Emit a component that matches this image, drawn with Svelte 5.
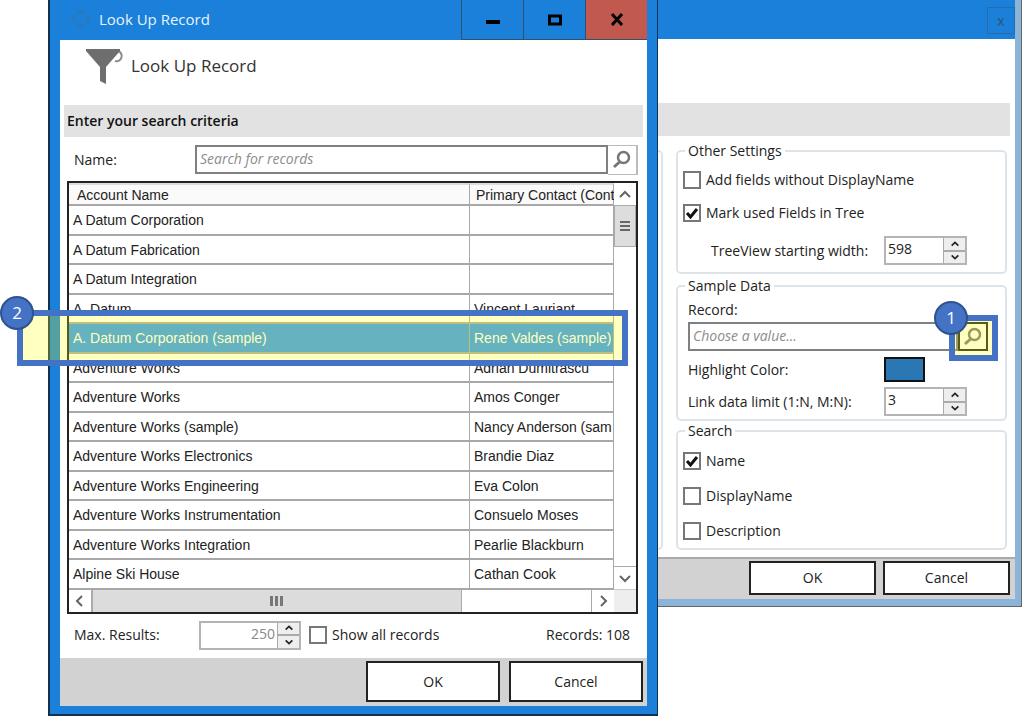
<script>
  const accounts = [
    { name: 'A Datum Corporation', contact: '' },
    { name: 'A Datum Fabrication', contact: '' },
    { name: 'A Datum Integration', contact: '' },
    { name: 'A. Datum', contact: 'Vincent Lauriant' },
    { name: 'A. Datum Corporation (sample)', contact: 'Rene Valdes (sample)' },
    { name: 'Adventure Works', contact: 'Adrian Dumitrascu' },
    { name: 'Adventure Works', contact: 'Amos Conger' },
    { name: 'Adventure Works (sample)', contact: 'Nancy Anderson (sam' },
    { name: 'Adventure Works Electronics', contact: 'Brandie Diaz' },
    { name: 'Adventure Works Engineering', contact: 'Eva Colon' },
    { name: 'Adventure Works Instrumentation', contact: 'Consuelo Moses' },
    { name: 'Adventure Works Integration', contact: 'Pearlie Blackburn' },
    { name: 'Alpine Ski House', contact: 'Cathan Cook' },
  ];

  let selected = $state(4);
  let search = $state('');
  let record = $state('');
  let maxResults = $state(250);
  let showAll = $state(false);
  let addFields = $state(false);
  let markUsed = $state(true);
  let treeWidth = $state(598);
  let linkLimit = $state(3);
  let byName = $state(true);
  let byDisplayName = $state(false);
  let byDescription = $state(false);
</script>

{#snippet magnifier()}
  <svg class="magnifier" viewBox="0 0 20 20" aria-hidden="true">
    <circle cx="11.500" cy="7.500" r="5.500" fill="none" stroke="currentColor" stroke-width="2.500" />
    <path d="M7.500 12 2 17" stroke="currentColor" stroke-width="3" />
  </svg>
{/snippet}

{#snippet arrow(d)}
  <svg class="arrow" viewBox="0 0 12 12" aria-hidden="true">
    <path {d} fill="none" stroke="currentColor" stroke-width="2" />
  </svg>
{/snippet}

{#snippet spinner(up, down)}
  <span class="spin">
    <button aria-label="Increase" onclick={up}>{@render arrow('M2 8l4-4 4 4')}</button>
    <button aria-label="Decrease" onclick={down}>{@render arrow('M2 4l4 4 4-4')}</button>
  </span>
{/snippet}

<div class="desktop">
  <section class="lookup">
    <header class="titlebar">
      <svg class="ring" viewBox="0 0 20 20" aria-hidden="true">
        <circle cx="10" cy="10" r="7" fill="none" stroke="#2b79b8" stroke-width="1" />
        <circle cx="10" cy="3" r="2.500" />
        <circle cx="17" cy="10" r="2.500" />
        <circle cx="10" cy="17" r="2.500" />
        <circle cx="3" cy="10" r="2.500" />
      </svg>
      <h1>Look Up Record</h1>
      <button class="winbtn" aria-label="Minimize">
        <svg viewBox="0 0 16 16"><path d="M1 10h14" stroke="#000" stroke-width="4" /></svg>
      </button>
      <button class="winbtn" aria-label="Maximize">
        <svg viewBox="0 0 16 16"><path d="M2.500 4h11v8h-11z" fill="none" stroke="#000" stroke-width="3" /></svg>
      </button>
      <button class="winbtn close" aria-label="Close">
        <svg viewBox="0 0 16 16"><path d="M3 2l10 11M13 2L3 13" stroke="#000" stroke-width="3" /></svg>
      </button>
    </header>

    <div class="body">
      <div class="heading">
        <svg class="funnel" viewBox="0 0 40 40" aria-hidden="true">
          <path d="M30 14a5 5 0 1 0 3-10" fill="none" stroke="#8a8a8a" stroke-width="2" />
          <path d="M1 2h34v2L21 20v17l-6-3V20L1 4z" fill="#6e6e6e" />
        </svg>
        <h2>Look Up Record</h2>
      </div>
      <h3>Enter your search criteria</h3>

      <div class="search">
        <label for="search">Name:</label>
        <input id="search" type="text" placeholder="Search for records" bind:value={search} />
        <button aria-label="Search">{@render magnifier()}</button>
      </div>

      <div class="grid">
        <div class="rows">
          <table>
            <thead>
              <tr><th>Account Name</th><th>Primary Contact (Cont</th></tr>
            </thead>
            <tbody>
              {#each accounts as account, i}
                <tr class:selected={i === selected} onclick={() => (selected = i)}>
                  <td>{account.name}</td>
                  <td>{account.contact}</td>
                </tr>
              {/each}
            </tbody>
          </table>
        </div>
        <div class="vscroll">
          <button aria-label="Scroll up">{@render arrow('M1 9l5-5 5 5')}</button>
          <span class="thumb"><i></i><i></i><i></i></span>
          <span class="track"></span>
          <button aria-label="Scroll down">{@render arrow('M1 4l5 5 5-5')}</button>
        </div>
        <div class="hscroll">
          <button aria-label="Scroll left">{@render arrow('M8 1L3 6l5 5')}</button>
          <span class="thumb"><i></i><i></i><i></i></span>
          <span class="track"></span>
          <button aria-label="Scroll right">{@render arrow('M4 1l5 5-5 5')}</button>
        </div>
        <div class="corner"></div>
        <div class="callout row-callout"><b>2</b></div>
      </div>

      <div class="limits">
        <label for="max">Max. Results:</label>
        <span class="number right">
          <input id="max" type="text" bind:value={maxResults} />
          {@render spinner(() => maxResults++, () => maxResults--)}
        </span>
        <label class="check"><input type="checkbox" bind:checked={showAll} />Show all records</label>
        <output>Records: 108</output>
      </div>

      <footer>
        <button>OK</button>
        <button>Cancel</button>
      </footer>
    </div>
  </section>

  <section class="settings">
    <header class="titlebar"><button aria-label="Close">x</button></header>
    <div class="banner"></div>
    <div class="panels">
      <div class="edge"></div>
      <div class="groups">
        <fieldset class="other">
          <legend>Other Settings</legend>
          <label class="check"><input type="checkbox" bind:checked={addFields} />Add fields without DisplayName</label>
          <label class="check"><input type="checkbox" bind:checked={markUsed} />Mark used Fields in Tree</label>
          <div class="field">
            <label class="indent" for="tree">TreeView starting width:</label>
            <span class="number">
              <input id="tree" type="text" bind:value={treeWidth} />
              {@render spinner(() => treeWidth++, () => treeWidth--)}
            </span>
          </div>
        </fieldset>

        <fieldset class="sample">
          <legend>Sample Data</legend>
          <label for="record">Record:</label>
          <div class="picker">
            <input id="record" type="text" placeholder="Choose a value..." bind:value={record} />
            <button aria-label="Look up record">{@render magnifier()}</button>
            <div class="callout pick-callout"><b>1</b></div>
          </div>
          <div class="field">
            <label for="color">Highlight Color:</label>
            <button id="color" class="swatch" aria-label="Highlight Color"></button>
          </div>
          <div class="field">
            <label for="limit">Link data limit (1:N, M:N):</label>
            <span class="number">
              <input id="limit" type="text" bind:value={linkLimit} />
              {@render spinner(() => linkLimit++, () => linkLimit--)}
            </span>
          </div>
        </fieldset>

        <fieldset class="find">
          <legend>Search</legend>
          <label class="check"><input type="checkbox" bind:checked={byName} />Name</label>
          <label class="check"><input type="checkbox" bind:checked={byDisplayName} />DisplayName</label>
          <label class="check"><input type="checkbox" bind:checked={byDescription} />Description</label>
        </fieldset>
      </div>
    </div>
    <footer>
      <button>OK</button>
      <button>Cancel</button>
    </footer>
  </section>
</div>

<style>
  :global(body) {
    background: #fff;
  }

  * {
    box-sizing: border-box;
  }

  .desktop {
    display: grid;
    grid-template-columns: 5fr 3fr;
    align-items: start;
    padding-left: 48px;
    font: 14px/20px 'Open Sans', 'Noto Sans', sans-serif;
    color: #222;
    overflow: hidden;
  }

  h1,
  h2,
  h3 {
    margin: 0;
    font-weight: 400;
  }

  button,
  input {
    font: inherit;
    color: inherit;
    border-radius: 0;
    margin: 0;
    padding: 0;
    min-width: 0;
  }

  button {
    display: flex;
    align-items: center;
    justify-content: center;
    background: #fff;
    border: 0;
  }

  .lookup {
    min-width: 0;
    background: #1a80d9;
    border: solid #14304f;
    border-width: 0 1px 2px 2px;
    padding: 0 10px 8px;
  }

  .titlebar {
    display: flex;
    align-items: flex-start;
    height: 40px;
  }

  .ring {
    width: 20px;
    height: 20px;
    margin: 9px 8px 0 11px;
    fill: #2b79b8;
  }

  h1 {
    flex: 1;
    font-size: 15px;
    line-height: 38px;
    color: #e8f3fc;
  }

  .winbtn {
    width: 62px;
    height: 40px;
    background: none;
    border: solid #31526e;
    border-width: 0 0 1px 1px;
  }

  .winbtn svg {
    width: 16px;
    height: 16px;
  }

  .winbtn.close {
    background: #c1594f;
  }

  .body {
    background: #fff;
  }

  .heading {
    display: flex;
    gap: 6px;
    height: 65px;
    padding: 7px 0 0 25px;
  }

  .funnel {
    width: 40px;
    height: 40px;
  }

  h2 {
    font-size: 17px;
    line-height: 38px;
    color: #333;
  }

  h3 {
    margin: 0 4px;
    padding: 0 3px;
    background: #e2e2e2;
    font-size: 14px;
    font-weight: 600;
    line-height: 32px;
    color: #111;
  }

  .search {
    display: flex;
    padding: 8px 9px 6px 14px;
  }

  .search label {
    width: 121px;
    line-height: 30px;
  }

  .search input {
    flex: 1;
    height: 29px;
    border: 2px solid #808080;
    padding: 0 3px 2px;
  }

  .search button {
    width: 30px;
    border: solid #bbb;
    border-width: 1px 2px 1px 0;
    color: #777;
  }

  input::placeholder {
    color: #8c8c8c;
    font-style: italic;
    opacity: 1;
  }

  .magnifier {
    width: 20px;
    height: 20px;
  }

  .arrow {
    width: 12px;
    height: 12px;
  }

  .grid {
    position: relative;
    display: grid;
    grid-template-columns: 1fr 22px;
    margin: 0 9px 0 7px;
    border: 2px solid #222;
    font-family: 'Liberation Sans', sans-serif;
  }

  .rows {
    overflow: hidden;
  }

  table {
    width: 100%;
    table-layout: fixed;
    border-collapse: separate;
    border-spacing: 0;
  }

  th,
  td {
    padding: 0 4px;
    border: solid #a8a8a8;
    border-width: 0 1px 2px 0;
    text-align: left;
    font-weight: 400;
    white-space: nowrap;
  }

  th {
    height: 23px;
    padding: 0 8px;
    border-top: 2px solid #ddd;
    line-height: 18px;
    background: #fafafa;
  }

  th:last-child {
    width: 144px;
    padding: 0 0 0 6px;
  }

  td:last-child {
    padding-right: 0;
  }

  td {
    height: 30px;
    line-height: 26px;
  }

  tr:nth-child(even) td {
    height: 29px;
  }

  .selected td {
    background: #3399ff;
    color: #fff;
  }

  .vscroll {
    display: flex;
    flex-direction: column;
    border-bottom: 1px solid #ccc;
  }

  .vscroll button {
    height: 22px;
    color: #666;
  }

  .vscroll .thumb {
    display: flex;
    flex-direction: column;
    align-items: center;
    justify-content: center;
    gap: 2px;
    height: 42px;
    background: #ddd;
    border: 1px solid #aaa;
  }

  .vscroll i {
    width: 10px;
    height: 2px;
    background: #666;
  }

  .track {
    flex: 1;
  }

  .vscroll .track {
    border-bottom: 1px solid #aaa;
  }

  .hscroll {
    display: flex;
    height: 22px;
  }

  .hscroll button {
    width: 22px;
    color: #666;
  }

  .hscroll .thumb {
    flex: 0 0 68%;
    display: flex;
    align-items: center;
    justify-content: center;
    gap: 2px;
    background: #dcdcdc;
    border: solid #aaa;
    border-width: 0 1px 0 2px;
  }

  .hscroll i {
    width: 3px;
    height: 10px;
    background: #777;
  }

  .hscroll .track {
    border-right: 1px solid #aaa;
  }

  .corner {
    background: #eee;
  }

  /* numbered markers drawn over the windows */
  .callout {
    position: absolute;
    border: 6px solid #4472c4;
    background: rgba(255, 255, 0, 0.25);
    pointer-events: none;
  }

  .callout b {
    position: absolute;
    width: 34px;
    height: 34px;
    border: 2px solid #2f528f;
    border-radius: 50%;
    background: #4472c4;
    color: #fff;
    font: 400 17px/30px 'Open Sans', sans-serif;
    text-align: center;
  }

  .row-callout {
    top: 127px;
    left: -52px;
    right: 8px;
    height: 56px;
  }

  .row-callout b {
    top: -20px;
    left: -23px;
  }

  .pick-callout {
    top: -7px;
    right: -10px;
    width: 49px;
    height: 46px;
  }

  .pick-callout b {
    top: -20px;
    left: -21px;
  }

  .limits {
    display: flex;
    align-items: center;
    height: 44px;
    padding: 0 17px 2px 14px;
  }

  .limits > label:first-child {
    width: 125px;
  }

  .number {
    display: flex;
    width: 83px;
    height: 29px;
    border: 2px solid #b4b4b4;
  }

  .number input {
    flex: 1;
    width: 20px;
    height: 21px;
    border: 0;
    padding: 0 2px;
  }

  .number.right {
    width: 102px;
    color: #888;
  }

  .number.right input {
    text-align: right;
  }

  .spin {
    display: flex;
    flex-direction: column;
    width: 22px;
    border-left: 1px solid #aaa;
    color: #222;
  }

  .spin button {
    flex: 1;
    background: #eee;
  }

  .spin button + button {
    border-top: 2px solid #aaa;
  }

  .spin .arrow {
    width: 10px;
    height: 10px;
  }

  .check {
    display: flex;
    align-items: center;
    gap: 5px;
  }

  .check input {
    appearance: none;
    width: 18px;
    height: 18px;
    border: 2px solid #777;
    background: #fff;
  }

  .check input:checked {
    background: #fff url("data:image/svg+xml,%3Csvg xmlns='http://www.w3.org/2000/svg' viewBox='0 0 14 14'%3E%3Cpath d='M2 7l3.500 4L12 3' fill='none' stroke='%23111' stroke-width='3'/%3E%3C/svg%3E");
  }

  .limits .check {
    margin-left: 8px;
  }

  output {
    margin-left: auto;
  }

  footer {
    display: flex;
    justify-content: flex-end;
    gap: 9px;
    padding: 3px 4px 4px;
    background: #d2d2d2;
  }

  footer button {
    width: 134px;
    height: 41px;
    border: 2px solid #222;
  }

  .settings {
    margin-right: 2px;
    min-width: 0;
    background: #fff;
    border: solid #666;
    border-width: 0 1px 1px 0;
    box-shadow: inset -6px -7px #8ab4d8;
    padding: 0 6px 7px 0;
  }

  .settings .titlebar {
    height: 39px;
    justify-content: flex-end;
    padding: 7px 0 0;
    background: #1a80d9;
  }

  .settings .titlebar button {
    width: 28px;
    height: 27px;
    border: 1px solid #2a6ca8;
    background: none;
    color: #31526e;
  }

  .banner {
    margin: 64px 5px 0 0;
    height: 33px;
    background: #e2e2e2;
  }

  .panels {
    display: flex;
    gap: 13px;
    padding: 5px 8px 7px 0;
  }

  .edge {
    width: 5px;
    margin-top: 9px;
    border: solid #dde4e9;
    border-width: 2px 2px 2px 0;
    border-radius: 0 5px 5px 0;
  }

  .groups {
    flex: 1;
    min-width: 0;
  }

  fieldset {
    min-width: 0;
    margin: 0;
    padding: 0 7px;
    border: 2px solid #dde4e9;
    border-radius: 5px;
  }

  legend {
    padding: 0 3px;
    line-height: 20px;
  }

  .other {
    height: 133px;
    padding-top: 9px;
  }

  .other .check {
    margin-bottom: 13px;
    margin-left: -2px;
  }

  .field {
    display: flex;
    align-items: center;
  }

  .field label {
    width: 199px;
    padding-left: 3px;
  }

  .field .indent {
    padding-left: 26px;
  }

  .sample {
    height: 145px;
    margin-top: 2px;
    padding-top: 4px;
  }

  .sample > label {
    display: block;
    padding-left: 3px;
  }

  .picker {
    position: relative;
    display: flex;
    margin: 2px 10px 6px 3px;
  }

  .picker input {
    flex: 1;
    height: 29px;
    border: 2px solid #808080;
    padding: 0 3px 2px;
  }

  .picker button {
    width: 30px;
    border: 2px solid #222;
    color: #777;
  }

  .swatch {
    width: 41px;
    height: 25px;
    border: 2px solid #111;
    background: #2b77b3;
  }

  .field + .field {
    margin-top: 5px;
  }

  .find {
    height: 129px;
    padding-top: 10px;
  }

  .find .check {
    margin: 0 0 15px -2px;
  }

  .settings footer {
    gap: 7px;
    padding: 2px 5px 4px;
    border-top: 2px solid #aaa;
  }

  .settings footer button {
    width: 127px;
    height: 34px;
  }
</style>
